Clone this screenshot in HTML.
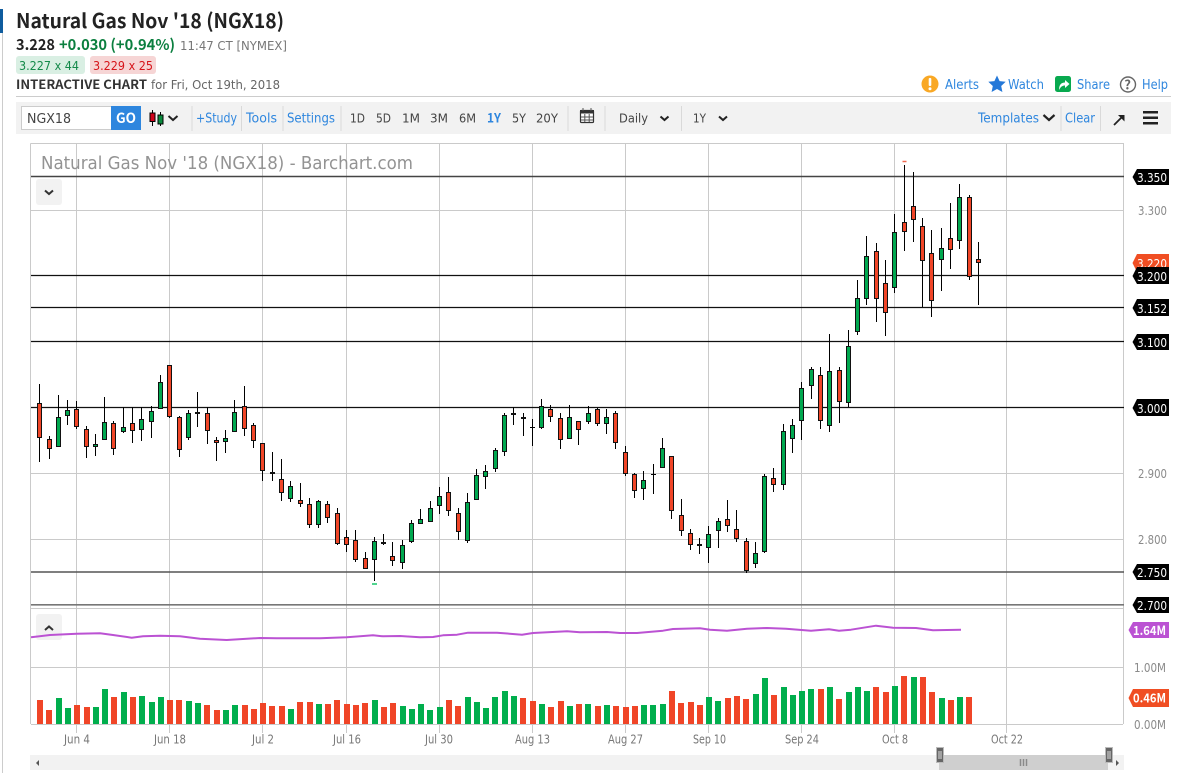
<!DOCTYPE html>
<html><head><meta charset="utf-8"><title>Natural Gas Nov '18 (NGX18)</title>
<style>
html,body{margin:0;padding:0;background:#fff;width:1186px;height:773px;overflow:hidden}
svg{display:block}
text{font-family:"DejaVu Sans","Liberation Sans",sans-serif;white-space:pre}
text[font-weight="700"]{font-family:"Noto Sans CJK SC","Liberation Sans",sans-serif}
.b{fill:#2e86de;font-size:13px}
.k{fill:#444;font-size:12.5px}
.a{fill:#8a8a8a;font-size:12.5px}
.w{fill:#fff;font-size:12.5px}
.d{fill:#777;font-size:12.5px}
</style></head><body>
<svg xmlns="http://www.w3.org/2000/svg" width="1186" height="773" viewBox="0 0 1186 773">
<rect width="1186" height="773" fill="#fff"/>
<rect x="0" y="9" width="3" height="24" fill="#0f5c9e"/>
<rect x="2" y="33" width="1" height="740" fill="#ccc"/>

<text x="16" y="28" font-size="20" font-weight="700" fill="#222" textLength="268" lengthAdjust="spacingAndGlyphs">Natural Gas Nov '18 (NGX18)</text>
<text x="16" y="50" font-size="15" font-weight="700" fill="#222" textLength="39" lengthAdjust="spacingAndGlyphs">3.228</text>
<text x="59" y="50" font-size="15" font-weight="700" fill="#0b7f3f" textLength="116" lengthAdjust="spacingAndGlyphs">+0.030 (+0.94%)</text>
<text x="180" y="50" font-size="12.5" fill="#777" textLength="107" lengthAdjust="spacingAndGlyphs">11:47 CT [NYMEX]</text>
<rect x="16" y="56" width="69" height="18" rx="3" fill="#d9efe3"/>
<text x="19" y="70" font-size="12.5" fill="#148a4a" textLength="60" lengthAdjust="spacingAndGlyphs">3.227 x 44</text>
<rect x="90" y="56" width="66" height="18" rx="3" fill="#f6d5d5"/>
<text x="93" y="70" font-size="12.5" fill="#d6141a" textLength="60" lengthAdjust="spacingAndGlyphs">3.229 x 25</text>
<text x="16" y="89" font-size="12.5" font-weight="700" fill="#333" textLength="131" lengthAdjust="spacingAndGlyphs">INTERACTIVE CHART</text>
<text x="151" y="89" font-size="12.5" fill="#666" textLength="129" lengthAdjust="spacingAndGlyphs">for Fri, Oct 19th, 2018</text>

<circle cx="930" cy="84" r="8.5" fill="#f9a825"/><rect x="928.7" y="78" width="2.6" height="8" rx="1" fill="#fff"/><circle cx="930" cy="88.7" r="1.5" fill="#fff"/>
<text x="945" y="89" class="b" textLength="34" lengthAdjust="spacingAndGlyphs">Alerts</text>
<path d="M997 75.5l2.6 5.6 6.1.7-4.5 4.2 1.2 6-5.4-3-5.4 3 1.2-6-4.500-4.200 6.100-.7z" fill="#2478d8"/>
<text x="1008" y="89" class="b" textLength="36" lengthAdjust="spacingAndGlyphs">Watch</text>
<rect x="1055" y="76" width="16" height="16" rx="2.5" fill="#08a94f"/>
<path d="M1059 90c0-5 2-7.500 6-7.500v-2.500l4.500 4-4.500 4v-2.500c-2.500 0-4.500 1.300-6 4.500z" fill="#fff"/>
<text x="1077" y="89" class="b" textLength="33" lengthAdjust="spacingAndGlyphs">Share</text>
<circle cx="1128" cy="84.500" r="7.500" fill="#fff" stroke="#666" stroke-width="1.400"/>
<text x="1124.300" y="89.500" font-size="13" font-weight="700" fill="#666">?</text>
<text x="1142" y="89" class="b" textLength="26" lengthAdjust="spacingAndGlyphs">Help</text>

<rect x="16" y="96" width="1155" height="1" fill="#ccc"/>
<rect x="16" y="102" width="1155" height="32" fill="#f2f2f2"/>
<rect x="21.500" y="106.500" width="90" height="23" fill="#fff" stroke="#ccc"/>
<text x="27" y="123" font-size="13.500" fill="#444" textLength="44" lengthAdjust="spacingAndGlyphs">NGX18</text>
<rect x="111" y="106" width="30" height="24" fill="#2e86de"/>
<text x="116" y="123" font-size="14" font-weight="700" fill="#fff" textLength="20" lengthAdjust="spacingAndGlyphs">GO</text>
<path d="M152.500 110v16M160.500 112v14" stroke="#000" fill="none"/>
<rect x="150" y="113" width="5" height="8.500" fill="#d0021b" stroke="#000"/>
<rect x="158" y="115" width="5" height="9" fill="#0a8a3c" stroke="#000"/>
<path d="M168.500 116l4.500 4 4.500-4" fill="none" stroke="#222" stroke-width="2"/>
<g fill="#d9d9d9">
<rect x="191.500" y="106" width="1" height="25"/><rect x="241" y="106" width="1" height="25"/><rect x="282.500" y="106" width="1" height="25"/><rect x="340.500" y="106" width="1" height="25"/><rect x="567.500" y="106" width="1" height="25"/><rect x="604.500" y="106" width="1" height="25"/><rect x="681" y="106" width="1" height="25"/><rect x="1060.500" y="106" width="1" height="25"/><rect x="1100" y="106" width="1" height="25"/>
</g>
<text x="196" y="122.500" class="b" textLength="41" lengthAdjust="spacingAndGlyphs">+Study</text>
<text x="246" y="122.500" class="b" textLength="31" lengthAdjust="spacingAndGlyphs">Tools</text>
<text x="287" y="122.500" class="b" textLength="48" lengthAdjust="spacingAndGlyphs">Settings</text>
<text x="350" y="122.500" class="k" textLength="15" lengthAdjust="spacingAndGlyphs">1D</text>
<text x="376" y="122.500" class="k" textLength="15" lengthAdjust="spacingAndGlyphs">5D</text>
<text x="402" y="122.500" class="k" textLength="18" lengthAdjust="spacingAndGlyphs">1M</text>
<text x="430" y="122.500" class="k" textLength="18" lengthAdjust="spacingAndGlyphs">3M</text>
<text x="459" y="122.500" class="k" textLength="17" lengthAdjust="spacingAndGlyphs">6M</text>
<text x="487" y="122.500" font-size="13" font-weight="700" fill="#2e86de" textLength="14" lengthAdjust="spacingAndGlyphs">1Y</text>
<text x="512" y="122.500" class="k" textLength="14" lengthAdjust="spacingAndGlyphs">5Y</text>
<text x="536" y="122.500" class="k" textLength="22" lengthAdjust="spacingAndGlyphs">20Y</text>
<rect x="580.500" y="110.500" width="13" height="12" rx="1" fill="#fff" stroke="#333" stroke-width="1.200"/>
<rect x="580" y="110" width="14" height="3.500" fill="#333"/>
<path d="M583 108v3M591 108v3M584.800 114v8M589.200 114v8M581 117h12M581 120h12" stroke="#555" stroke-width="1" fill="none"/>
<text x="619" y="122.500" class="k" textLength="29" lengthAdjust="spacingAndGlyphs">Daily</text>
<path d="M660.500 116.500l4 3.500 4-3.500" fill="none" stroke="#222" stroke-width="2"/>
<text x="693" y="122.500" class="k" textLength="13" lengthAdjust="spacingAndGlyphs">1Y</text>
<path d="M719 116.500l4 3.500 4-3.500" fill="none" stroke="#222" stroke-width="2"/>
<text x="978" y="122.500" class="b" textLength="61" lengthAdjust="spacingAndGlyphs">Templates</text>
<path d="M1043.500 115l5.500 5 5.500-5" fill="none" stroke="#222" stroke-width="2.200"/>
<text x="1065" y="122.500" class="b" textLength="30" lengthAdjust="spacingAndGlyphs">Clear</text>
<path d="M1114 125l8-8" stroke="#222" stroke-width="1.800" fill="none"/><path d="M1118 115h6.500v6.500z" fill="#222"/>
<rect x="1143" y="111" width="15" height="2.500" fill="#222"/><rect x="1143" y="116.500" width="15" height="2.500" fill="#222"/><rect x="1143" y="122" width="15" height="2.500" fill="#222"/>

<!-- grid -->
<g stroke="#cacaca" stroke-width="1" fill="none" shape-rendering="crispEdges">
<path d="M30.500 143.500H1123.500V724M30.500 143.500V724"/>
<path d="M31 210.500H1123M31 473.500H1123M31 539.500H1123M31 608.500H1123M31 667.500H1123M31 724.500H1123"/>
<path d="M76.500 143V733M169.500 143V733M262.500 143V733M346.500 143V733M439.500 143V733M532.500 143V733M625.500 143V733M708.500 143V733M801.500 143V733M894.500 143V733M1006.500 143V733"/>
</g>
<text x="41" y="169" font-size="17.500" fill="#939393" textLength="372" lengthAdjust="spacingAndGlyphs">Natural Gas Nov '18 (NGX18) - Barchart.com</text>

<!-- level lines -->
<g fill="none">
<path d="M31 176.500H1124" stroke="#444" stroke-width="1.400"/>
<path d="M31 275.500H1124M31 307.500H1124M31 341.500H1124M31 407.500H1124" stroke="#111" stroke-width="1.200"/>
<path d="M31 572H1124" stroke="#555" stroke-width="1.600"/>
<path d="M31 604.800H1124" stroke="#777" stroke-width="1.600"/>
</g>
<rect x="36" y="179" width="26" height="26" rx="3" fill="#f2f2f2"/>
<path d="M45 190.500l4 3.500 4-3.500" fill="none" stroke="#333" stroke-width="2"/>

<!-- wicks -->
<path stroke="#000" stroke-width="1" fill="none" shape-rendering="crispEdges" d="M39.500 384V462M49.500 436V459M58.500 395V447M67.500 400V425M76.500 401V429M86.500 426V458M95.500 434V456M104.500 397V440M113.500 421V455M123.500 407V433M132.500 407V443M141.500 407V441M151.500 406V438M160.500 375V409M169.500 365V418M179.500 416V457M188.500 410V440M197.500 392V427M207.500 407V444M216.500 437V461M225.500 430V453M234.500 400V432M244.500 386V436M253.500 423V448M262.500 443V481M272.500 452V481M281.500 459V501M290.500 481V502M300.500 483V507M309.500 498V528M318.500 500V528M327.500 501V523M337.500 508V545M346.500 530V552M355.500 530V562M365.500 552V569M374.500 537V581M383.500 534V545M392.500 542V566M402.500 540V569M411.500 520V543M420.500 509V524M430.500 501V522M439.500 487V514M448.500 477V516M458.500 508V540M467.500 493V543M476.500 469V500M485.500 465V489M495.500 448V472M504.500 413V456M513.500 407V425M523.500 413V436M532.500 419V446M541.500 399V429M550.500 405V422M560.500 413V449M569.500 405V439M578.500 421V445M588.500 406V424M597.500 408V426M606.500 409V434M615.500 411V449M625.500 446V476M634.500 473V498M643.500 471V500M653.500 464V494M662.500 438V468M671.500 456V519M681.500 499V536M690.500 529V550M699.500 538V554M708.500 526V563M718.500 518V548M727.500 500V532M736.500 510V542M746.500 538V573M755.500 542V568M764.500 474V553M773.500 468V492M783.500 424V490M792.500 419V453M801.500 382V440M811.500 367V399M820.500 367V429M829.500 334V432M839.500 367V423M848.500 330V407M857.500 280V335M866.500 236V305M876.500 243V322M885.500 260V336M894.500 214V293M904.500 165V251M913.500 172V242M922.500 218V307M931.500 230V317M941.500 228V291M950.500 203V269M959.500 184V249M969.500 195V280M978.500 242V305M530 427.500h5M651 474.500h5"/>

<!-- red bodies -->
<path fill="#f04527" stroke="#111" stroke-width="1" shape-rendering="crispEdges" d="M37.500 403.500h4V437.500h-4zM47.500 439.500h4V448.500h-4zM74.500 409.500h4V426.500h-4zM84.500 429.500h4V446.500h-4zM111.500 423.500h4V448.500h-4zM130.500 423.500h4V430.500h-4zM167.500 365.500h4V416.500h-4zM177.500 417.500h4V449.500h-4zM205.500 413.500h4V430.500h-4zM214.500 440.500h4V442.500h-4zM242.500 406.500h4V428.500h-4zM251.500 425.500h4V440.500h-4zM260.500 443.500h4V470.500h-4zM279.500 479.500h4V492.500h-4zM298.500 500.500h4V503.500h-4zM307.500 504.500h4V524.500h-4zM325.500 504.500h4V517.500h-4zM335.500 513.500h4V543.500h-4zM344.500 537.500h4V544.500h-4zM353.500 540.500h4V559.500h-4zM363.500 558.500h4V568.500h-4zM381.500 542.500h4V543.500h-4zM390.500 556.500h4V560.500h-4zM446.500 492.500h4V510.500h-4zM456.500 513.500h4V531.500h-4zM521.500 417.500h4V418.500h-4zM548.500 409.500h4V416.500h-4zM558.500 418.500h4V439.500h-4zM576.500 421.500h4V429.500h-4zM595.500 409.500h4V423.500h-4zM613.500 413.500h4V442.500h-4zM623.500 452.500h4V473.500h-4zM632.500 474.500h4V490.500h-4zM669.500 456.500h4V510.500h-4zM679.500 515.500h4V530.500h-4zM688.500 533.500h4V544.500h-4zM697.500 544.500h4V545.500h-4zM725.500 519.500h4V525.500h-4zM734.500 529.500h4V538.500h-4zM744.500 541.500h4V570.500h-4zM771.500 478.500h4V484.500h-4zM818.500 375.500h4V420.500h-4zM837.500 370.500h4V401.500h-4zM874.500 251.500h4V298.500h-4zM883.500 283.500h4V312.500h-4zM902.500 222.500h4V231.500h-4zM911.500 206.500h4V219.500h-4zM920.500 226.500h4V260.500h-4zM929.500 253.500h4V300.500h-4zM948.500 238.500h4V249.500h-4zM967.500 197.500h4V276.500h-4zM976.500 259.500h4V262.500h-4z"/>

<!-- green bodies -->
<path fill="#00a84f" stroke="#111" stroke-width="1" shape-rendering="crispEdges" d="M56.500 417.500h4V446.500h-4zM65.500 410.500h4V415.500h-4zM93.500 444.500h4V446.500h-4zM102.500 422.500h4V439.500h-4zM121.500 427.500h4V431.500h-4zM139.500 419.500h4V429.500h-4zM149.500 411.500h4V421.500h-4zM158.500 382.500h4V408.500h-4zM186.500 413.500h4V437.500h-4zM195.500 412.500h4V413.500h-4zM223.500 438.500h4V441.500h-4zM232.500 412.500h4V431.500h-4zM270.500 472.500h4V473.500h-4zM288.500 486.500h4V498.500h-4zM316.500 501.500h4V524.500h-4zM372.500 541.500h4V559.500h-4zM400.500 545.500h4V562.500h-4zM409.500 523.500h4V541.500h-4zM418.500 519.500h4V523.500h-4zM428.500 508.500h4V521.500h-4zM437.500 496.500h4V505.500h-4zM465.500 502.500h4V540.500h-4zM474.500 475.500h4V499.500h-4zM483.500 471.500h4V476.500h-4zM493.500 450.500h4V468.500h-4zM502.500 415.500h4V451.500h-4zM511.500 413.500h4V414.500h-4zM539.500 406.500h4V427.500h-4zM567.500 417.500h4V438.500h-4zM586.500 413.500h4V421.500h-4zM604.500 417.500h4V423.500h-4zM641.500 480.500h4V488.500h-4zM660.500 448.500h4V467.500h-4zM706.500 534.500h4V547.500h-4zM716.500 521.500h4V530.500h-4zM753.500 553.500h4V563.500h-4zM762.500 476.500h4V551.500h-4zM781.500 431.500h4V484.500h-4zM790.500 425.500h4V438.500h-4zM799.500 388.500h4V420.500h-4zM809.500 369.500h4V385.500h-4zM827.500 371.500h4V425.500h-4zM846.500 346.500h4V402.500h-4zM855.500 298.500h4V331.500h-4zM864.500 256.500h4V298.500h-4zM892.500 232.500h4V287.500h-4zM939.500 248.500h4V259.500h-4zM957.500 197.500h4V240.500h-4z"/>

<path d="M902.500 161.500h4" stroke="#f06a50" stroke-width="1.500" fill="none"/>
<path d="M372 584h5" stroke="#19c76b" stroke-width="1.500" fill="none"/>

<!-- lower pane -->
<rect x="36" y="614" width="26" height="26" rx="3" fill="#f2f2f2"/>
<path d="M45 630l4-3.500 4 3.500" fill="none" stroke="#333" stroke-width="2"/>
<path d="M31 637.300L50 635L76.700 633.700L100 633.300L113 635L131.700 637.700L143 636.300L160 635.700L180 636.300L200 638.700L226.700 640L260 638L276.700 638.300L320 638.300L346.700 637.300L373 635.300L383 636.300L400 636L420 637.300L433 637L443 635.300L457 634.700L468 632.700L497 632.700L522 634.700L533 633L567 631.300L580 632.300L607 632L620 633L637 633L663 630.700L673 629L700 628.300L710 629.700L727 630.700L747 628.700L767 628L786 628.700L811 630.700L829 629.300L839 630.700L851 629.700L876 625.700L893 627.700L916 628L933 630.300L961 629.700" fill="none" stroke="#bb52d3" stroke-width="2" stroke-linejoin="round"/>

<path fill="#f04527" d="M37 700h6V724h-6zM46 710h6V724h-6zM74 705h6V724h-6zM84 707h6V724h-6zM111 697h6V724h-6zM130 697h6V724h-6zM167 700h6V724h-6zM176 700h6V724h-6zM204 705h6V724h-6zM214 710h6V724h-6zM242 705h6V724h-6zM251 709h6V724h-6zM260 703h6V724h-6zM269 706h6V724h-6zM279 706h6V724h-6zM297 702h6V724h-6zM307 702h6V724h-6zM325 704h6V724h-6zM334 700h6V724h-6zM344 704h6V724h-6zM353 705h6V724h-6zM362 703h6V724h-6zM381 707h6V724h-6zM390 703h6V724h-6zM446 700h6V724h-6zM455 706h6V724h-6zM520 698h6V724h-6zM530 701h6V724h-6zM548 707h6V724h-6zM558 701h6V724h-6zM576 704h6V724h-6zM595 706h6V724h-6zM613 706h6V724h-6zM623 707h6V724h-6zM632 706h6V724h-6zM669 691h6V724h-6zM678 703h6V724h-6zM688 702h6V724h-6zM697 705h6V724h-6zM725 698h6V724h-6zM734 696h6V724h-6zM743 699h6V724h-6zM771 695h6V724h-6zM818 689h6V724h-6zM836 699h6V724h-6zM873 687h6V724h-6zM883 692h6V724h-6zM901 676h6V724h-6zM920 677h6V724h-6zM929 692h6V724h-6zM948 700h6V724h-6zM966 697h6V724h-6z"/>
<path fill="#00ae4d" d="M56 698h6V724h-6zM65 708h6V724h-6zM93 707h6V724h-6zM102 689h6V724h-6zM121 692h6V724h-6zM139 696h6V724h-6zM149 702h6V724h-6zM158 697h6V724h-6zM186 701h6V724h-6zM195 703h6V724h-6zM223 710h6V724h-6zM232 705h6V724h-6zM288 709h6V724h-6zM316 704h6V724h-6zM372 700h6V724h-6zM400 706h6V724h-6zM409 709h6V724h-6zM418 704h6V724h-6zM427 710h6V724h-6zM437 707h6V724h-6zM465 697h6V724h-6zM474 702h6V724h-6zM483 708h6V724h-6zM492 697h6V724h-6zM502 691h6V724h-6zM511 696h6V724h-6zM539 704h6V724h-6zM567 706h6V724h-6zM585 704h6V724h-6zM604 705h6V724h-6zM641 705h6V724h-6zM650 705h6V724h-6zM660 704h6V724h-6zM706 697h6V724h-6zM715 701h6V724h-6zM753 694h6V724h-6zM762 678h6V724h-6zM781 687h6V724h-6zM790 695h6V724h-6zM799 691h6V724h-6zM808 689h6V724h-6zM827 687h6V724h-6zM846 692h6V724h-6zM855 687h6V724h-6zM864 691h6V724h-6zM892 686h6V724h-6zM911 677h6V724h-6zM939 698h6V724h-6zM957 697h6V724h-6z"/>

<!-- date labels -->
<text x="64" y="743.500" class="d" textLength="26" lengthAdjust="spacingAndGlyphs">Jun 4</text>
<text x="154" y="743.500" class="d" textLength="32" lengthAdjust="spacingAndGlyphs">Jun 18</text>
<text x="252" y="743.500" class="d" textLength="22" lengthAdjust="spacingAndGlyphs">Jul 2</text>
<text x="333" y="743.500" class="d" textLength="28" lengthAdjust="spacingAndGlyphs">Jul 16</text>
<text x="425" y="743.500" class="d" textLength="28" lengthAdjust="spacingAndGlyphs">Jul 30</text>
<text x="515" y="743.500" class="d" textLength="35" lengthAdjust="spacingAndGlyphs">Aug 13</text>
<text x="608" y="743.500" class="d" textLength="35" lengthAdjust="spacingAndGlyphs">Aug 27</text>
<text x="693" y="743.500" class="d" textLength="33" lengthAdjust="spacingAndGlyphs">Sep 10</text>
<text x="785" y="743.500" class="d" textLength="34" lengthAdjust="spacingAndGlyphs">Sep 24</text>
<text x="882" y="743.500" class="d" textLength="26" lengthAdjust="spacingAndGlyphs">Oct 8</text>
<text x="991" y="743.500" class="d" textLength="32" lengthAdjust="spacingAndGlyphs">Oct 22</text>

<!-- axis labels -->
<path fill="#000" d="M1132.500 177L1137 169H1169V185H1137z"/>
<text x="1137" y="182" class="w" textLength="30" lengthAdjust="spacingAndGlyphs">3.350</text>
<text x="1138" y="215" class="a" textLength="29" lengthAdjust="spacingAndGlyphs">3.300</text>
<path fill="#f04e23" d="M1132.500 263L1137 254H1169V272H1137z"/>
<text x="1137" y="268" class="w" textLength="30" lengthAdjust="spacingAndGlyphs">3.220</text>
<path fill="#000" d="M1132.500 276L1137 267H1169V284H1137z"/>
<text x="1137" y="281" class="w" textLength="30" lengthAdjust="spacingAndGlyphs">3.200</text>
<path fill="#000" d="M1132.500 308L1137 299H1169V316H1137z"/>
<text x="1137" y="313" class="w" textLength="30" lengthAdjust="spacingAndGlyphs">3.152</text>
<path fill="#000" d="M1132.500 342L1137 334H1169V350H1137z"/>
<text x="1137" y="347" class="w" textLength="30" lengthAdjust="spacingAndGlyphs">3.100</text>
<path fill="#000" d="M1132.500 408L1137 399H1169V416H1137z"/>
<text x="1137" y="413" class="w" textLength="30" lengthAdjust="spacingAndGlyphs">3.000</text>
<text x="1138" y="478" class="a" textLength="29" lengthAdjust="spacingAndGlyphs">2.900</text>
<text x="1138" y="544" class="a" textLength="29" lengthAdjust="spacingAndGlyphs">2.800</text>
<path fill="#000" d="M1132.500 572L1137 564H1169V580H1137z"/>
<text x="1137" y="577" class="w" textLength="30" lengthAdjust="spacingAndGlyphs">2.750</text>
<path fill="#000" d="M1132.500 605L1137 597H1169V613H1137z"/>
<text x="1137" y="610" class="w" textLength="30" lengthAdjust="spacingAndGlyphs">2.700</text>
<path fill="#bb52d3" d="M1128.500 630L1133 622H1169V638H1133z"/>
<text x="1133" y="635" class="w" textLength="33" lengthAdjust="spacingAndGlyphs" font-weight="700">1.64M</text>
<text x="1134" y="672" class="a" textLength="32" lengthAdjust="spacingAndGlyphs">1.00M</text>
<path fill="#f04e23" d="M1128.500 698L1133 689H1169V707H1133z"/>
<text x="1133" y="702.500" class="w" textLength="33" lengthAdjust="spacingAndGlyphs" font-weight="700">0.46M</text>
<text x="1134" y="729" class="a" textLength="32" lengthAdjust="spacingAndGlyphs">0.00M</text>

<!-- scrollbar -->
<rect x="30" y="755" width="1094" height="15" fill="#f2f2f2"/>
<rect x="939" y="755" width="169" height="15" fill="#cfcfcf"/>
<path d="M39 760v6l-3-3z" fill="#555"/>
<path d="M1116 760v6l3-3z" fill="#555"/>
<path d="M1020.500 759v7M1023.500 759v7M1026.500 759v7" stroke="#8a8a8a" stroke-width="1.500" fill="none"/>
<rect x="936.500" y="747.500" width="7" height="15" fill="#666" stroke="#bbb"/>
<path d="M939 751v8M941 751v8" stroke="#ddd" fill="none"/>
<rect x="1105.500" y="747.500" width="7" height="15" fill="#666" stroke="#bbb"/>
<path d="M1108 751v8M1110 751v8" stroke="#ddd" fill="none"/>
</svg>
</body></html>
